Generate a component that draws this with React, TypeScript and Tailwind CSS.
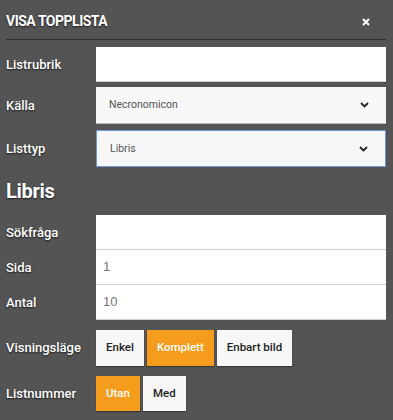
import React from 'react';

const font = "font-['Roboto','Liberation_Sans',Arial,sans-serif]";
const shadow = '[text-shadow:0_1px_2px_rgba(0,0,0,0.7)]';

const Chevron = () => (
  <svg width="9" height="6" viewBox="0 0 9 6" fill="none">
    <path d="M1 1l3.5 3.5L8 1" stroke="#222" strokeWidth="1.8" />
  </svg>
);

const Label = ({ children }: { children: React.ReactNode }) => (
  <div className={`w-[90px] shrink-0 text-[13px] font-medium text-white ${shadow}`}>{children}</div>
);

const TextRow = ({ label, value, h = 'h-[35px]' }: { label: string; value?: string; h?: string }) => (
  <div className="flex items-center">
    <Label>{label}</Label>
    <div className={`flex-1 ${h} bg-white border-b border-[#cfcfcf] flex items-center px-[7px] text-[13px] text-[#777] font-['Liberation_Sans',Arial,sans-serif]`}>
      {value}
    </div>
  </div>
);

const SelectRow = ({ label, value, active }: { label: string; value: string; active?: boolean }) => (
  <div className="flex items-center">
    <Label>{label}</Label>
    <div
      className={`flex-1 h-[37px] bg-[#f7f7f7] flex items-center justify-between pl-[13px] pr-[17px] text-[10.5px] text-[#555] ${
        active ? 'border border-[#6b96dc]' : 'border-b border-[#bdbdbd]'
      }`}
    >
      <span>{value}</span>
      <Chevron />
    </div>
  </div>
);

const Btn = ({ children, on }: { children: React.ReactNode; on?: boolean }) => (
  <div
    className={`h-full flex items-center px-[10px] text-[11.5px] font-medium shadow-[0_1px_1px_rgba(0,0,0,0.35)] ${
      on ? 'bg-[#f59c1d] text-white' : 'bg-[#f7f7f7] text-[#222]'
    }`}
  >
    {children}
  </div>
);

export default function App() {
  return (
    <div className={`w-[393px] h-[420px] bg-[#545454] px-[6px] pr-[7px] ${font} overflow-hidden`}>
      <div className="h-[40px] flex items-center justify-between border-b border-[#2f2f2f]">
        <span className={`text-[14px] font-bold text-white tracking-[-0.5px] mt-[4px] ${shadow}`}>VISA TOPPLISTA</span>
        <svg width="8" height="8" viewBox="0 0 8 8" className="mr-[16px] mt-[4px]">
          <path d="M1 1l6 6M7 1L1 7" stroke="#fff" strokeWidth="2" />
        </svg>
      </div>

      <div className="flex flex-col mt-[7px]">
        <TextRow label="Listrubrik" />
        <div className="h-[5px]" />
        <SelectRow label="Källa" value="Necronomicon" />
        <div className="h-[6px]" />
        <SelectRow label="Listtyp" value="Libris" active />

        <div className={`h-[48px] flex items-center text-[20px] font-bold text-white tracking-[-0.3px] ${shadow}`}>Libris</div>

        <div className="flex flex-col">
          <TextRow label="Sökfråga" />
          <TextRow label="Sida" value="1" />
          <TextRow label="Antal" value="10" />
        </div>

        <div className="flex items-center mt-[10px] h-[36px]">
          <Label>Visningsläge</Label>
          <div className="flex gap-[3px] h-full">
            <Btn>Enkel</Btn>
            <Btn on>Komplett</Btn>
            <Btn>Enbart bild</Btn>
          </div>
        </div>

        <div className="flex items-center mt-[10px] h-[35px]">
          <Label>Listnummer</Label>
          <div className="flex gap-[3px] h-full">
            <Btn on>Utan</Btn>
            <Btn>Med</Btn>
          </div>
        </div>
      </div>
    </div>
  );
}
